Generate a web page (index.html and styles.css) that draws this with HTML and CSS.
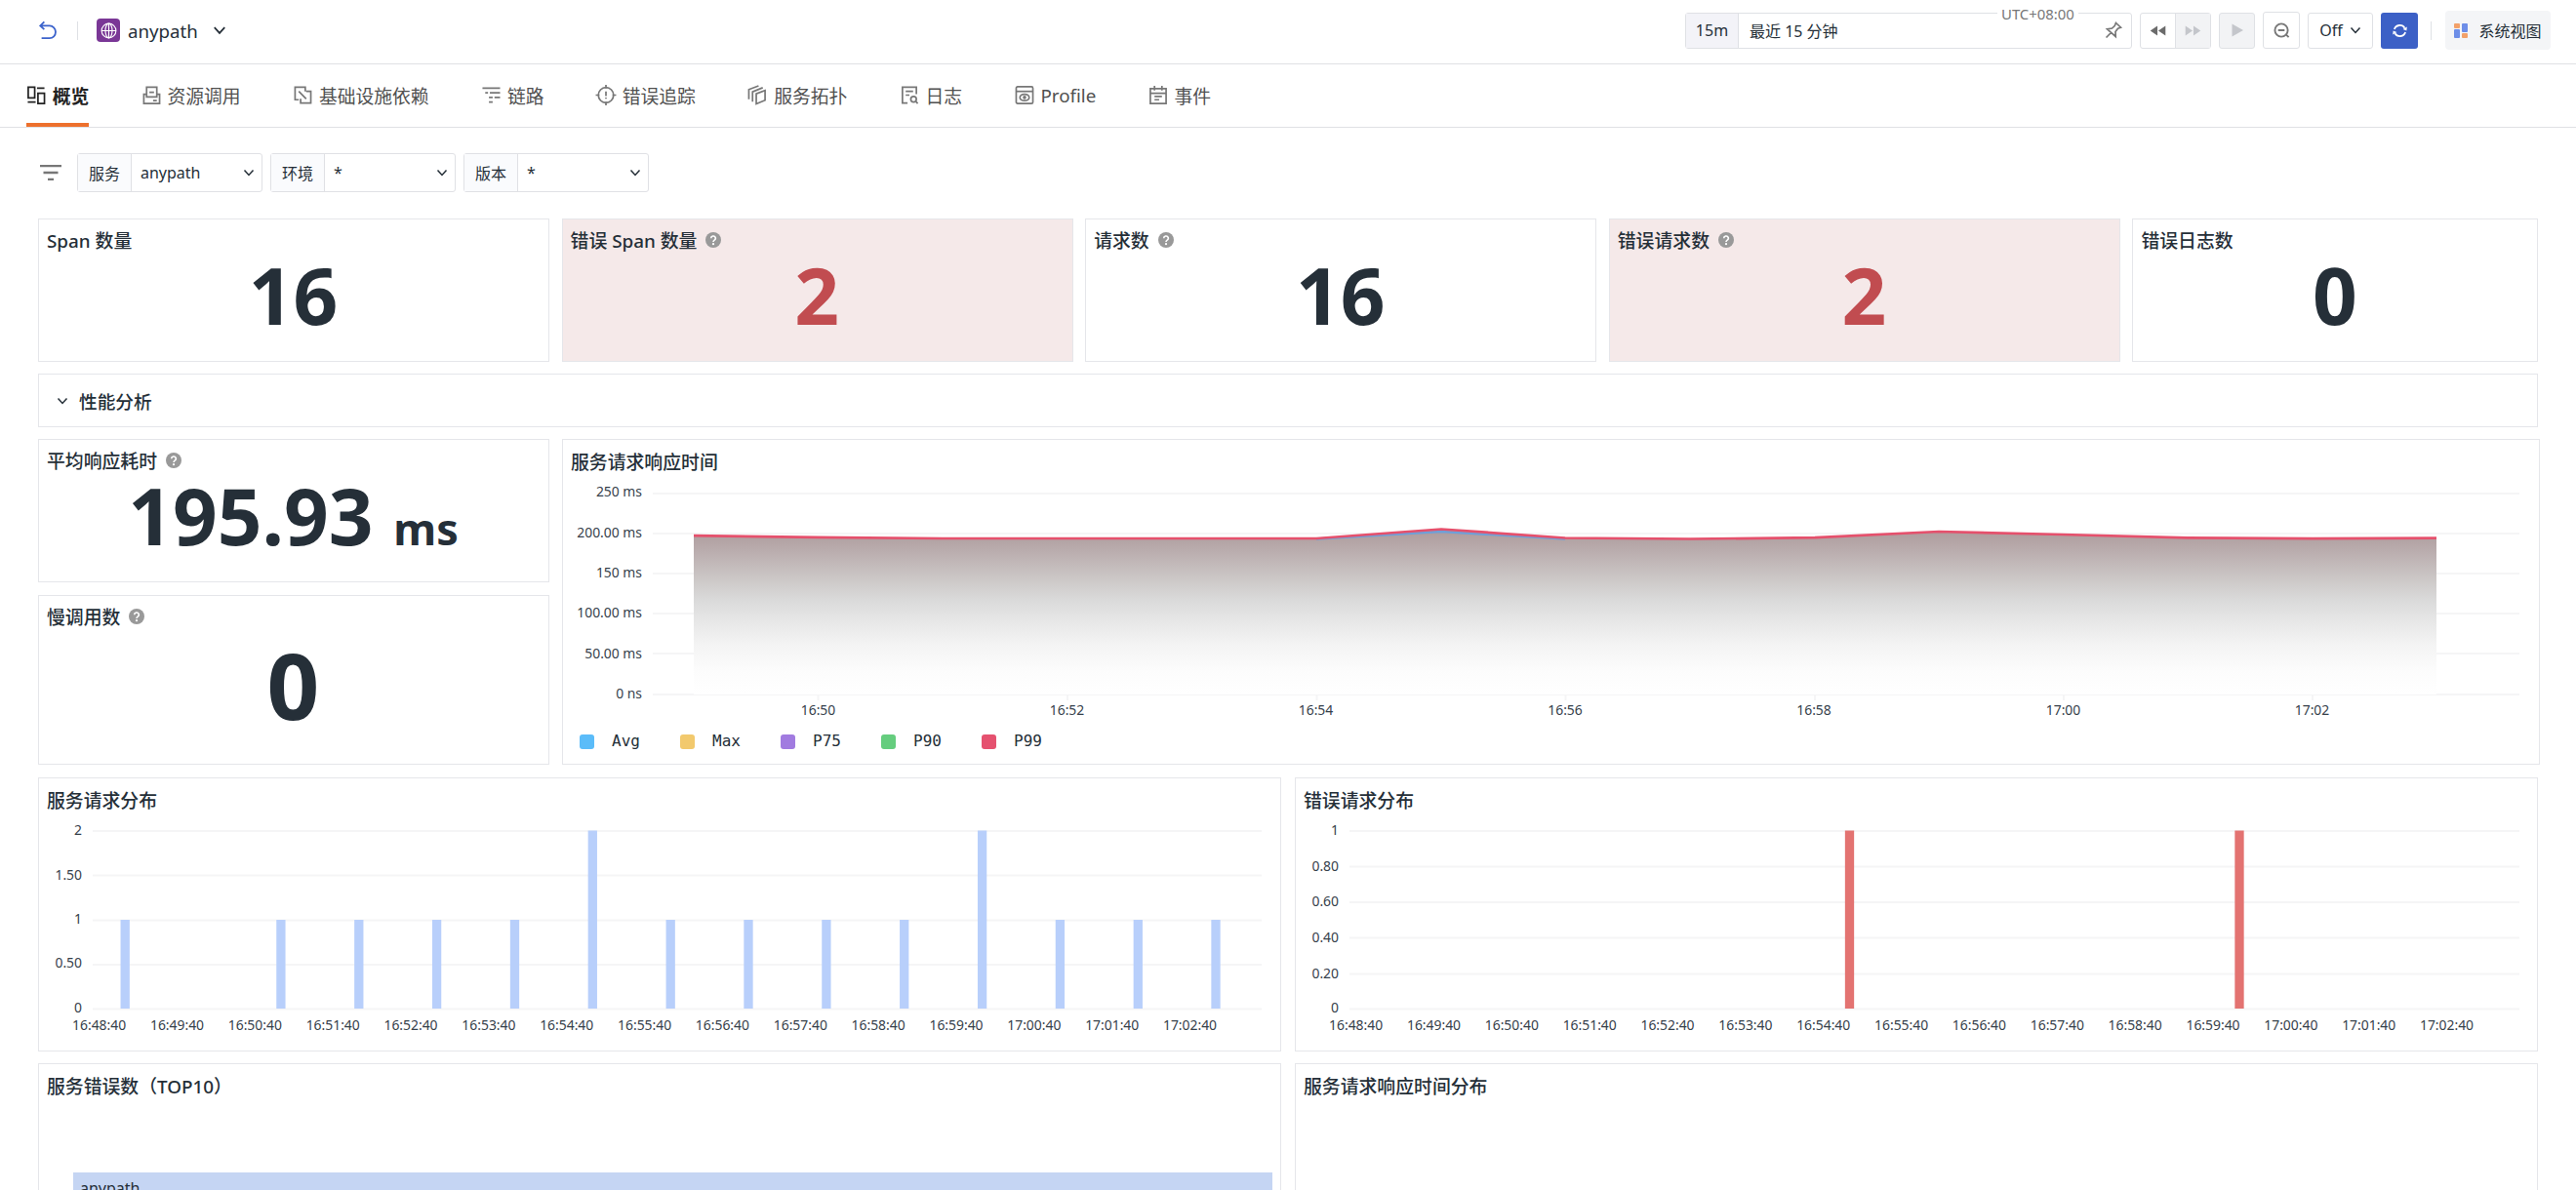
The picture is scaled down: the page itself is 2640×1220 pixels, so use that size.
FILE: index.html
```
<!DOCTYPE html>
<html lang="zh-CN">
<head>
<meta charset="UTF-8" />
<meta name="viewport" content="width=device-width, initial-scale=1.0" />
<title>anypath - 概览</title>
<link rel="stylesheet" href="styles.css">
</head>
<body>
<svg class="defs" width="0" height="0">
<symbol id="down" viewBox="0 0 12 12"><path d="M1.5 3.5 6 8.5l4.500-5" fill="none" stroke="currentColor" stroke-width="1.5"/></symbol>
<symbol id="help" viewBox="0 0 16 16"><circle cx="8" cy="8" r="8" fill="#999"/><path d="M5.700 6.300a2.300 2.200 0 1 1 3.500 1.800C8.300 8.700 8 9 8 10" fill="none" stroke="#fff" stroke-width="1.6"/><circle cx="8" cy="12.200" r="1.100" fill="#fff"/></symbol>
</svg>

<header class="header">
<svg class="back" viewBox="0 0 20 22" fill="none" stroke="#3c63cc" stroke-width="2"><path d="M6 1.500 1.500 6 6 10M1.500 6H12a6.500 6.700 0 0 1 0 14H3"/></svg>
<i class="line"></i>
<span class="logo"><svg viewBox="0 0 18 18" fill="none" stroke="#fff" stroke-width="1.200"><circle cx="9" cy="9" r="7.800"/><ellipse cx="9" cy="9" rx="3.700" ry="7.800"/><path d="M9 1v16M1 9h16"/></svg></span>
<span class="name">anypath</span>
<svg class="arrow name-arrow"><use href="#down"/></svg>
<div class="tools">
<div class="time">
<span class="range">15m</span>
<span class="recent">最近 15 分钟</span>
<span class="utc">UTC+08:00</span>
<svg class="pin" viewBox="0 0 18 18" fill="none" stroke="#777" stroke-width="1.700"><path d="M11.500 1.500 16.500 6.200 13.500 7.200 11 10.500 11.200 15.500 2.500 7.800 7.500 7 10.200 4.500ZM6.500 11.500 1.500 16.500"/></svg>
</div>
<div class="group">
<span><svg viewBox="0 0 18 12" fill="#6b6b6b"><path d="M8.500.5v11L.5 6ZM17.500.5v11L9.500 6Z"/></svg></span>
<span class="off"><svg viewBox="0 0 18 12" fill="#c4c6cb"><path d="M.5.5v11L8.500 6ZM9.500.5v11l8-5.500Z"/></svg></span>
</div>
<div class="btn play"><svg viewBox="0 0 12 14" fill="#c4c6cb"><path d="M.5.500v13L12 7Z"/></svg></div>
<div class="btn zoom"><svg viewBox="0 0 18 18" fill="none" stroke="#777" stroke-width="2"><circle cx="8.500" cy="8.500" r="7"/><path d="M5 8.500h7M13.300 12.800l3.200 3.200"/></svg></div>
<div class="btn refresh-time">Off <svg class="arrow"><use href="#down"/></svg></div>
<div class="refresh"><svg viewBox="0 0 18 16" fill="none" stroke="#fff" stroke-width="1.900"><path d="M3 6.500a6.200 6 0 0 1 11.300-1.500M15 9.500A6.200 6 0 0 1 3.700 11"/><path d="M16.800 3.800 16.300 8 12.300 6.500ZM1.200 12.200 1.700 8l4 1.500Z" fill="#fff" stroke="none"/></svg></div>
<i class="line"></i>
<div class="views"><svg viewBox="0 0 14 15"><rect width="6" height="5" rx="1" fill="#f2a16a"/><rect y="6" width="6" height="9" rx="1" fill="#6d8ee8"/><rect x="8" width="6" height="9" rx="1" fill="#6d8ee8"/><rect x="8" y="10" width="6" height="5" rx="1" fill="#f2a16a"/></svg>系统视图</div>
</div>
</header>

<nav class="tabs">
<a class="tab active"><svg viewBox="0 0 20 20"><path d="M1.500 1.500h7v11.500h-7ZM1 17.500h8.500M11 2.500h8M12 8h7v11h-7Z"/></svg>概览</a>
<a class="tab"><svg viewBox="0 0 20 20"><path d="M5 9V1.500h11V9M2 19V9h3v3h11V9h3v10ZM8 7h5M12 16h4"/></svg>资源调用</a>
<a class="tab"><svg viewBox="0 0 20 20"><path d="M13 6V1.500H2V15h4M14 6h5v12.500H8V14M6 6l8 8"/></svg>基础设施依赖</a>
<a class="tab"><svg viewBox="0 0 20 20"><path d="M1 2.500h19M4 7.500h3M9 7.500h11M8 12.500h4M14 12.500h6M8 17.500h4"/></svg>链路</a>
<a class="tab"><svg viewBox="0 0 20 20"><circle cx="10" cy="10" r="8.200"/><path d="M10-1v4M10 17v4M-1 10h4M17 10h4M10 6v5M10 12.500V14"/></svg>错误追踪</a>
<a class="tab"><svg viewBox="0 0 20 20"><path d="M9 8.500 18.500 5v10.500L9 19.500ZM5 17V6.500L16 2M1 14.500V4L11.500 0"/></svg>服务拓扑</a>
<a class="tab"><svg viewBox="0 0 20 20"><path d="M8 18.500H2.500V1.500h15V9M6 6h8M6 10h4M17 17l2 2"/><circle cx="14.500" cy="14.500" r="3"/></svg>日志</a>
<a class="tab"><svg viewBox="0 0 20 20"><rect x="1" y="1" width="18" height="18" rx="1.500"/><path d="M1 6h18"/><ellipse cx="10" cy="12.500" rx="5" ry="3.500"/><circle cx="10" cy="12.500" r="1"/></svg>Profile</a>
<a class="tab"><svg viewBox="0 0 20 20"><path d="M1.500 3h17v16h-17ZM1.500 8h17M6 0v5M14 0v5M6 11.500h8M6 15h5"/></svg>事件</a>
</nav>

<div class="filters">
<svg class="filter-icon" viewBox="0 0 22 16"><path d="M0 1.200h22M3.500 8h15M8 14.800h6" stroke="#777" stroke-width="2.300"/></svg>
<div class="select"><label>服务</label><span>anypath</span><svg class="arrow"><use href="#down"/></svg></div>
<div class="select"><label>环境</label><span>*</span><svg class="arrow"><use href="#down"/></svg></div>
<div class="select"><label>版本</label><span>*</span><svg class="arrow"><use href="#down"/></svg></div>
</div>

<main class="board">
<div class="row stats">
<div class="card"><h3>Span 数量</h3><div class="num">16</div></div>
<div class="card error"><h3>错误 Span 数量 <svg class="help"><use href="#help"/></svg></h3><div class="num">2</div></div>
<div class="card"><h3>请求数 <svg class="help"><use href="#help"/></svg></h3><div class="num">16</div></div>
<div class="card error"><h3>错误请求数 <svg class="help"><use href="#help"/></svg></h3><div class="num">2</div></div>
<div class="card"><h3>错误日志数</h3><div class="num">0</div></div>
</div>

<div class="card section"><svg class="arrow"><use href="#down"/></svg>性能分析</div>

<div class="row perf">
<div class="left">
<div class="card avg"><h3>平均响应耗时 <svg class="help"><use href="#help"/></svg></h3><div class="num">195.93 <small>ms</small></div></div>
<div class="card slow"><h3>慢调用数 <svg class="help"><use href="#help"/></svg></h3><div class="num big">0</div></div>
</div>
<div class="card chart-card">
<h3>服务请求响应时间</h3>
<svg class="chart" width="2024" height="250" viewBox="577 490 2024 250">
<defs><linearGradient id="area" gradientUnits="userSpaceOnUse" x1="0" y1="545" x2="0" y2="712">
<stop offset="0" stop-color="#ae9c9d"/><stop offset=".12" stop-color="#baadae"/><stop offset=".3" stop-color="#cdc9c8"/><stop offset=".42" stop-color="#dadada"/><stop offset=".55" stop-color="#e7e7e7"/><stop offset=".7" stop-color="#f4f4f4"/><stop offset=".85" stop-color="#fcfcfc"/><stop offset="1" stop-color="#fff"/>
</linearGradient></defs>
<path class="grid" d="M669 506H2582M669 547H2582M669 588H2582M669 629H2582M669 670H2582M669 712H2582M838.500 712v6M1094 712v6M1349.500 712v6M1604.500 712v6M1860 712v6M2115 712v6M2370 712v6"/>
<path fill="url(#area)" d="M711 549 838 550.500 966 552H1349L1477 543 1604 551.500 1732 552.500 1860 551 1987 545 2114 548 2242 551 2370 552 2497 551.500V712H711Z"/>
<path class="avg-line" d="M1349 552.500 1477 545 1604 552.500"/>
<path class="p99-line" d="M711 549.200 838 550.800 966 552H1349L1477 542.500 1604 551.500 1732 552.500 1860 551.200 1987 545 2114 548 2242 551.300 2370 552.200 2497 551.700"/>
<g class="ylabel"><text x="658" y="509">250 ms</text><text x="658" y="551">200.00 ms</text><text x="658" y="592">150 ms</text><text x="658" y="633">100.00 ms</text><text x="658" y="674.500">50.00 ms</text><text x="658" y="715.500">0 ns</text></g>
<g class="xlabel"><text x="838.500" y="733">16:50</text><text x="1093.500" y="733">16:52</text><text x="1348.500" y="733">16:54</text><text x="1604" y="733">16:56</text><text x="1859" y="733">16:58</text><text x="2114.500" y="733">17:00</text><text x="2369.500" y="733">17:02</text></g>
</svg>
<ul class="legend">
<li><i class="c-avg"></i>Avg</li>
<li><i class="c-max"></i>Max</li>
<li><i class="c-p75"></i>P75</li>
<li><i class="c-p90"></i>P90</li>
<li><i class="c-p99"></i>P99</li>
</ul>
</div>
</div>

<div class="row half dist">
<div class="card chart-card">
<h3>服务请求分布</h3>
<svg class="chart" width="1272" height="230" viewBox="40 838 1272 230">
<path class="grid" d="M95 852H1293M95 897.500H1293M95 943.500H1293M95 989H1293M95 1034.500H1293"/>
<path class="bar" d="M128.200 1034V943M287.900 1034V943M367.800 1034V943M447.600 1034V943M527.500 1034V943M607.300 1034V851.500M687.200 1034V943M767 1034V943M846.900 1034V943M926.700 1034V943M1006.600 1034V851.500M1086.400 1034V943M1166.300 1034V943M1246 1034V943"/>
<g class="ylabel"><text x="84" y="855.500">2</text><text x="84" y="901.500">1.50</text><text x="84" y="947">1</text><text x="84" y="992">0.50</text><text x="84" y="1038">0</text></g>
<g class="xlabel"><text x="101.600" y="1056">16:48:40</text><text x="181.500" y="1056">16:49:40</text><text x="261.300" y="1056">16:50:40</text><text x="341.200" y="1056">16:51:40</text><text x="421" y="1056">16:52:40</text><text x="500.900" y="1056">16:53:40</text><text x="580.700" y="1056">16:54:40</text><text x="660.600" y="1056">16:55:40</text><text x="740.400" y="1056">16:56:40</text><text x="820.300" y="1056">16:57:40</text><text x="900.100" y="1056">16:58:40</text><text x="980" y="1056">16:59:40</text><text x="1059.800" y="1056">17:00:40</text><text x="1139.700" y="1056">17:01:40</text><text x="1219.500" y="1056">17:02:40</text></g>
</svg>
</div>
<div class="card chart-card">
<h3>错误请求分布</h3>
<svg class="chart" width="1272" height="230" viewBox="1328 838 1272 230">
<path class="grid" d="M1383 852H2582M1383 888.500H2582M1383 925H2582M1383 961.500H2582M1383 998.500H2582M1383 1034.500H2582"/>
<path class="bar red" d="M1895.500 1034V851.500M2295 1034V851.500"/>
<g class="ylabel"><text x="1372" y="855.500">1</text><text x="1372" y="892.500">0.80</text><text x="1372" y="929">0.60</text><text x="1372" y="965.500">0.40</text><text x="1372" y="1002.500">0.20</text><text x="1372" y="1038">0</text></g>
<g class="xlabel"><text x="1389.600" y="1056">16:48:40</text><text x="1469.500" y="1056">16:49:40</text><text x="1549.300" y="1056">16:50:40</text><text x="1629.200" y="1056">16:51:40</text><text x="1709" y="1056">16:52:40</text><text x="1788.900" y="1056">16:53:40</text><text x="1868.700" y="1056">16:54:40</text><text x="1948.600" y="1056">16:55:40</text><text x="2028.400" y="1056">16:56:40</text><text x="2108.300" y="1056">16:57:40</text><text x="2188.100" y="1056">16:58:40</text><text x="2268" y="1056">16:59:40</text><text x="2347.800" y="1056">17:00:40</text><text x="2427.700" y="1056">17:01:40</text><text x="2507.500" y="1056">17:02:40</text></g>
</svg>
</div>
</div>

<div class="row half top">
<div class="card"><h3>服务错误数（TOP10）</h3><div class="top-bar">anypath</div></div>
<div class="card"><h3>服务请求响应时间分布</h3></div>
</div>
</main>
</body>
</html>
```
FILE: styles.css
```
* {
box-sizing: border-box;
}
body {
margin: 0;
width: 2640px;
height: 1220px;
overflow: hidden;
background: #fff;
color: #252f38;
font-family: "Noto Sans", "Noto Sans CJK SC", sans-serif;
font-size: 16px;
}
svg {
display: block;
flex: none;
overflow: visible;
}
.defs {
position: absolute;
}
.arrow {
width: 12px;
height: 12px;
}
.line {
width: 1px;
height: 19px;
background: #dfe1e5;
}

/* header */
.header {
display: flex;
align-items: center;
height: 66px;
padding: 0 26px 3px 39px;
border-bottom: 1px solid #e0e1e4;
}
.back {
width: 20px;
height: 20px;
margin-right: 20px;
}
.logo {
display: flex;
align-items: center;
justify-content: center;
width: 24px;
height: 24px;
margin: 0 8px 0 19px;
border-radius: 4px;
background: #7a3796;
}
.logo svg {
width: 17px;
height: 17px;
}
.name {
font-size: 18.67px;
width: 73px;
}
.name-arrow {
width: 14px;
height: 14px;
margin-left: 14px;
}
.tools {
display: flex;
align-items: center;
margin-left: auto;
}
.time {
position: relative;
display: flex;
align-items: center;
width: 458px;
height: 37px;
border: 1px solid #dfe1e5;
border-radius: 3px;
}
.range {
display: flex;
align-items: center;
justify-content: center;
width: 54px;
height: 35px;
border-right: 1px solid #dfe1e5;
background: #f3f3f8;
}
.recent {
padding-left: 11px;
}
/* timezone label sits on the border */
.utc {
position: absolute;
top: -10px;
left: 319px;
padding: 0 4px;
background: #fff;
color: #777;
font-size: 14.9px;
line-height: 20px;
}
.pin {
width: 18px;
height: 18px;
margin: 0 9px 0 auto;
}
.group,
.btn {
display: flex;
align-items: center;
justify-content: center;
height: 37px;
border: 1px solid #dfe1e5;
border-radius: 3px;
}
.group {
width: 73px;
margin: 0 8px;
}
.group span {
display: flex;
align-items: center;
justify-content: center;
flex: 1;
height: 100%;
}
.group .off {
border-left: 1px solid #dfe1e5;
background: #f2f3f5;
}
.group svg {
width: 17px;
height: 11px;
}
.play {
width: 37px;
background: #f2f3f5;
}
.play svg {
width: 12px;
height: 14px;
}
.zoom {
width: 38px;
height: 38px;
margin: 0 8px;
}
.zoom svg {
width: 17px;
height: 17px;
}
.refresh-time {
gap: 7px;
width: 67px;
}
.refresh {
display: flex;
align-items: center;
justify-content: center;
width: 38px;
height: 37px;
margin: 0 13px 0 8px;
border-radius: 3px;
background: #3c60c6;
}
.refresh svg {
width: 17px;
height: 15px;
}
.views {
display: flex;
align-items: center;
justify-content: center;
gap: 11px;
width: 108px;
height: 40px;
margin-left: 14px;
border-radius: 4px;
background: #f4f5f7;
}
.views svg {
width: 14px;
height: 15px;
}

/* tabs */
.tabs {
display: flex;
gap: 53.6px;
height: 65px;
padding-left: 27px;
border-bottom: 1px solid #e0e1e4;
}
.tab {
display: flex;
align-items: center;
gap: 6.7px;
padding-top: 3px;
border-bottom: 4px solid transparent;
color: #505050;
font-size: 18.8px;
}
.tab svg {
width: 20px;
height: 19px;
fill: none;
stroke: #777;
stroke-width: 1.8;
}
.tab.active {
border-color: #ed702d;
color: #222;
font-weight: bold;
}
.tab.active svg {
stroke: #222;
}

/* filters */
.filters {
display: flex;
align-items: center;
gap: 8px;
height: 93px;
padding: 0 0 1px 41px;
}
.filter-icon {
width: 22px;
height: 16px;
margin-right: 8px;
}
.select {
display: flex;
align-items: center;
width: 190px;
height: 40px;
padding-right: 7px;
border: 1px solid #e0e1e5;
border-radius: 3px;
}
.select label {
display: flex;
align-items: center;
justify-content: center;
width: 55px;
height: 38px;
border-right: 1px solid #e0e1e5;
background: #fafbfd;
}
.select span {
flex: 1;
padding-left: 9px;
}

/* dashboard */
.board {
display: flex;
flex-direction: column;
gap: 12px;
padding: 0 37px 0 39px;
}
.card {
border: 1px solid #e5e6ea;
background: #fff;
overflow: hidden;
}
.card.error {
background: #f5e9e9;
}
h3 {
display: flex;
align-items: center;
gap: 9px;
height: 40px;
margin: 0;
padding: 1px 8px 0;
font-size: 18.85px;
font-weight: 500;
}
.help {
width: 16px;
height: 16px;
}
.num {
padding-right: 1px;
font-size: 80px;
font-weight: bold;
line-height: 73px;
text-align: center;
}
.error .num {
color: #c14c50;
}
.num small {
font-size: 45px;
}
.num.big {
padding-top: 15px;
font-size: 94px;
}
.row {
display: grid;
}
.stats {
grid-template-columns: repeat(4, 524px) 416px;
gap: 12.6px;
height: 147px;
}
.section {
display: flex;
align-items: center;
gap: 11px;
width: 2562px;
height: 55px;
padding: 0 0 0 18px;
font-size: 18.67px;
font-weight: 500;
}
.perf {
grid-template-columns: 524px 2027px;
gap: 13px;
height: 334px;
margin-bottom: 1px;
}
.left {
display: flex;
flex-direction: column;
gap: 13px;
}
.avg {
height: 147px;
}
.slow {
flex: 1;
}
.chart-card h3 {
padding-top: 3px;
}
.perf .chart-card h3 {
height: 39px;
padding-top: 4px;
}
.chart {
font-size: 13.9px;
}
.grid {
stroke: #f5f5f6;
stroke-width: 2;
}
.avg-line {
fill: none;
stroke: #6f9fd8;
stroke-width: 2.5;
}
.p99-line {
fill: none;
stroke: #e5506c;
stroke-width: 2.7;
}
.ylabel {
fill: #36414b;
text-anchor: end;
}
.xlabel {
fill: #36414b;
text-anchor: middle;
}
.legend {
display: flex;
margin: 0;
padding: 9px 0 0 17px;
list-style: none;
font-family: "DejaVu Sans Mono", monospace;
font-size: 16px;
line-height: 22px;
}
.legend li {
display: flex;
align-items: center;
gap: 18px;
width: 103px;
}
.legend i {
width: 15px;
height: 15px;
border-radius: 3px;
}
.c-avg {
background: #5bbcf9;
}
.c-max {
background: #f2c96d;
}
.c-p75 {
background: #a17be0;
}
.c-p90 {
background: #65cd7e;
}
.c-p99 {
background: #e5516f;
}
.half {
grid-template-columns: 1274px 1274px;
gap: 14px;
}
.dist {
height: 281px;
}
.bar {
stroke: #b8cffb;
stroke-width: 9.3;
}
.bar.red {
stroke: #e37371;
}
.top {
height: 130px;
}
.top .card {
border-bottom: 0;
}
.top h3 {
padding-top: 3px;
}
.top-bar {
width: 1229px;
height: 80px;
margin: 71px 0 0 35px;
padding: 5px 7px;
background: #c5d5f3;
}
```
